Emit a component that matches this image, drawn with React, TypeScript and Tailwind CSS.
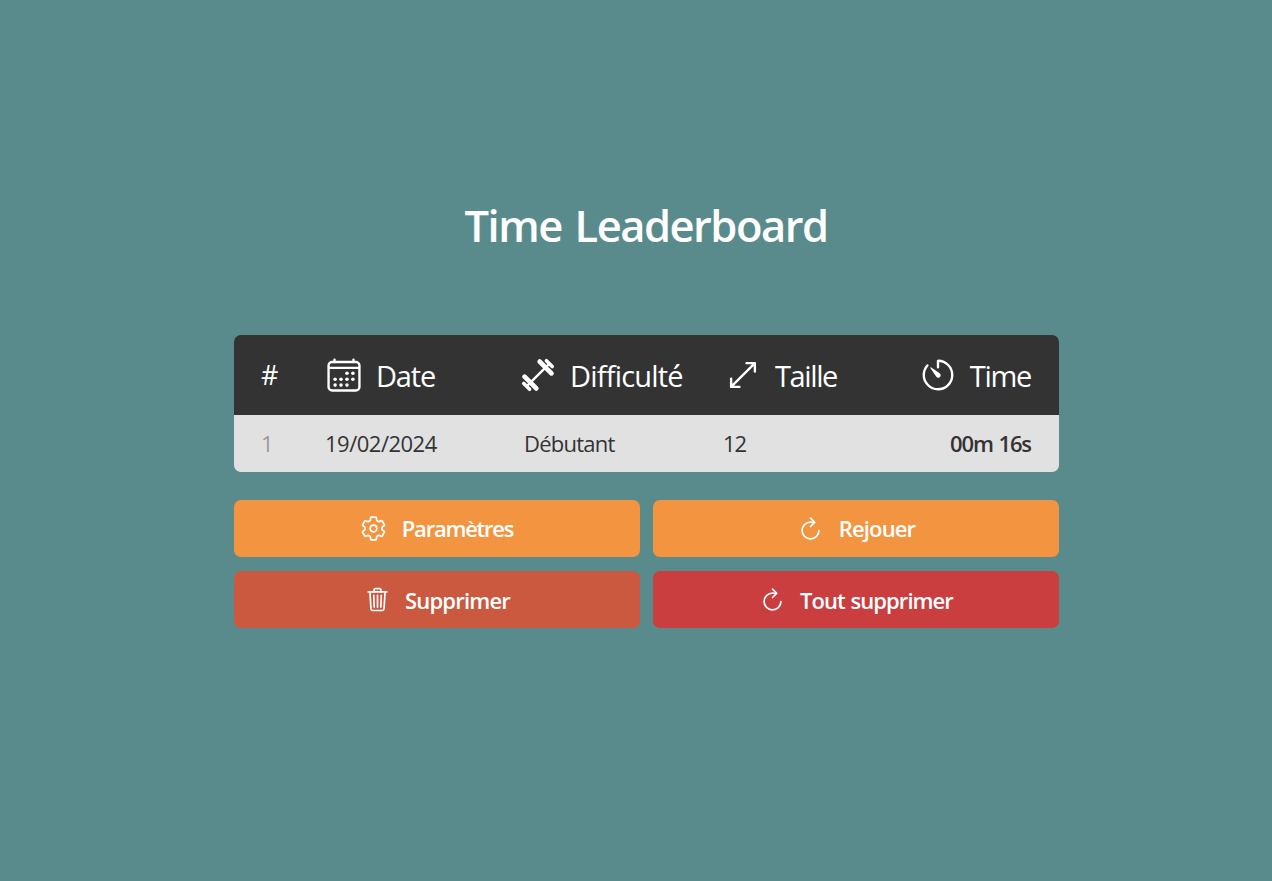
import type { ReactNode } from "react";
import {
  IoBarbellOutline,
  IoCalendarOutline,
  IoRefreshOutline,
  IoResizeOutline,
  IoSettingsOutline,
  IoTimerOutline,
  IoTrashOutline,
} from "react-icons/io5";

function Heading({ icon, children, className }: { icon: ReactNode; children: ReactNode; className: string }) {
  return (
    <div className={`flex items-center text-[29px] ${className}`}>
      {icon}
      <span className="pt-0.5">{children}</span>
    </div>
  );
}

function Action({ icon, children, className }: { icon: ReactNode; children: ReactNode; className: string }) {
  return (
    <button className={`flex h-[57px] items-center justify-center rounded-[7px] text-[22px] leading-none font-semibold [word-spacing:1px] ${className}`}>
      {icon}
      <span>{children}</span>
    </button>
  );
}

const columns = "grid grid-cols-[91px_199px_199px_195px_minmax(0,1fr)] items-center";

export default function App() {
  return (
    <main className="flex h-[881px] w-full flex-col bg-[#598b8d] pt-[196px] pl-[234px] font-['Open_Sans',sans-serif] text-white">
      <h1 className="h-[139px] w-[825px] pr-px text-center text-[43.5px] leading-[60px] font-semibold tracking-[-1.5px] [word-spacing:3px]">
        Time Leaderboard
      </h1>
      <section className="w-[825px] overflow-hidden rounded-[7px]">
        <div className={`${columns} h-20 bg-[#333333]`}>
          <span className="pt-px pl-[27px] text-[27px]">#</span>
          <Heading className="gap-[13px] tracking-[-1.2px]" icon={<IoCalendarOutline className="size-[38px] shrink-0" />}>Date</Heading>
          <Heading className="-ml-[5px] gap-[13px] tracking-[-0.8px]" icon={<IoBarbellOutline className="size-[38px] shrink-0 -rotate-45" />}>Difficulté</Heading>
          <Heading className="ml-px gap-[13px] tracking-[-1.4px]" icon={<IoResizeOutline className="size-[38px] shrink-0" />}>Taille</Heading>
          <Heading className="justify-end gap-[13px] pr-7 tracking-[-1.3px]" icon={<IoTimerOutline className="size-[38px] shrink-0" />}>Time</Heading>
        </div>
        <div className={`${columns} h-[57px] bg-[#e1e1e1] text-[22px] text-[#333333]`}>
          <span className="pl-[27px] text-[#999999]">1</span>
          <span className="tracking-[-0.5px]">19/02/2024</span>
          <span className="tracking-[-0.75px]">Débutant</span>
          <span className="tracking-[-1px]">12</span>
          <span className="pr-7 text-right font-semibold tracking-[-1.1px] [word-spacing:1px]">00m 16s</span>
        </div>
      </section>
      <div className="mt-7 grid w-[825px] grid-cols-2 gap-x-[13px] gap-y-3.5">
        <Action className="gap-[15px] pr-px pb-px bg-[#f39540] tracking-[-1.25px]" icon={<IoSettingsOutline className="size-[27px]" />}>Paramètres</Action>
        <Action className="gap-[15px] pb-px bg-[#f39540] tracking-[-0.85px]" icon={<IoRefreshOutline className="size-[27px]" />}>Rejouer</Action>
        <Action className="gap-3.5 bg-[#ca5940] tracking-[-0.8px]" icon={<IoTrashOutline className="size-[27px]" />}>Supprimer</Action>
        <Action className="gap-3.5 bg-[#ca3e40] tracking-[-0.95px]" icon={<IoRefreshOutline className="size-[27px]" />}>Tout supprimer</Action>
      </div>
    </main>
  );
}
